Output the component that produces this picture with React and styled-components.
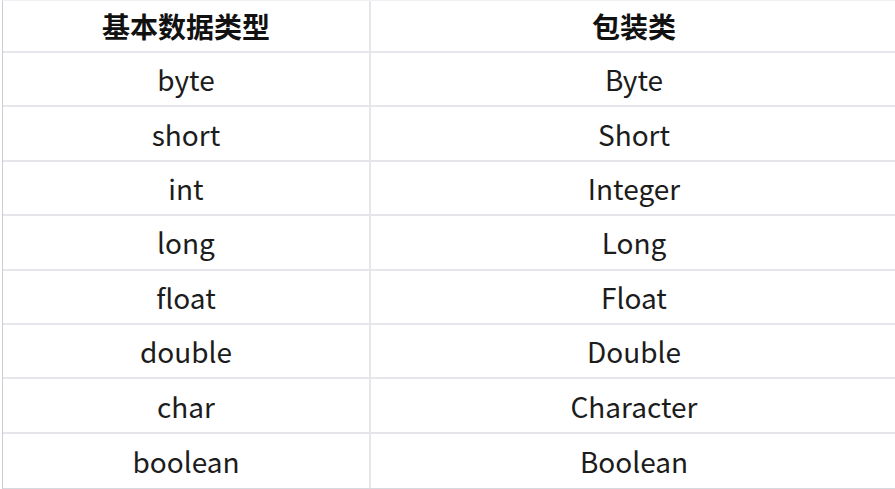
import React from 'react'
import styled, { createGlobalStyle } from 'styled-components'

const GlobalStyle = createGlobalStyle`
  html, body {
    margin: 0;
    padding: 0;
    background: #ffffff;
    overflow: hidden;
  }
  body {
    font-family: "Noto Sans CJK SC", "Noto Sans", sans-serif;
    color: #1c1c1c;
  }
`;

const Wrap = styled.div`
  width: 895px;
  height: 489px;
  overflow: hidden;
  padding-left: 2px;
  box-sizing: border-box;
`;

const Table = styled.div`
  display: grid;
  grid-template-columns: 368px 526px;
  width: 895px;
  border-left: 1px solid #c9cdd3;
  border-top: 1px solid #eef0f3;
  border-bottom: 2px solid #d6d9de;
`;

const Cell = styled.div`
  display: flex;
  align-items: center;
  justify-content: center;
  box-sizing: border-box;
  height: ${p => (p.$head ? '52px' : '54.4px')};
  border-bottom: ${p => (p.$last ? '0' : '2px solid #e4e6ea')};
  border-right: ${p => (p.$first ? '2px solid #e4e6ea' : '0')};
  font-size: 28px;
  line-height: 1;
  font-weight: ${p => (p.$head ? 700 : 400)};
  color: ${p => (p.$head ? '#111111' : '#1c1c1c')};
  padding-bottom: ${p => (p.$last ? '0' : '0')};
`;

const rows = [
  ['byte', 'Byte'],
  ['short', 'Short'],
  ['int', 'Integer'],
  ['long', 'Long'],
  ['float', 'Float'],
  ['double', 'Double'],
  ['char', 'Character'],
  ['boolean', 'Boolean'],
];

const App = () => {
  return (
    <Wrap>
      <GlobalStyle />
      <Table>
        <Cell $head $first>基本数据类型</Cell>
        <Cell $head>包装类</Cell>
        {rows.map(([a, b], i) => (
          <React.Fragment key={a}>
            <Cell $first $last={i === rows.length - 1}>{a}</Cell>
            <Cell $last={i === rows.length - 1}>{b}</Cell>
          </React.Fragment>
        ))}
      </Table>
    </Wrap>
  )
}

export default App
